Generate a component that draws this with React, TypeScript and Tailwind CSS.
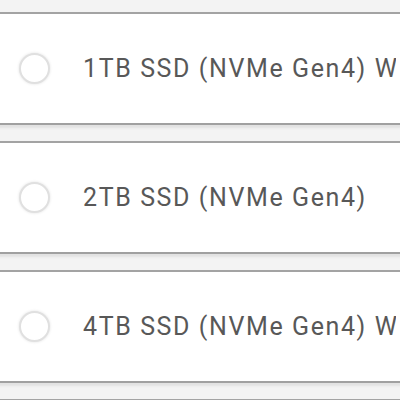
const OPTIONS = [
  '1TB SSD (NVMe Gen4) With Heatsink',
  '2TB SSD (NVMe Gen4)',
  '4TB SSD (NVMe Gen4) With Heatsink',
  '8TB SSD (NVMe Gen4)',
]

export default function App() {
  return (
    <div className="h-[400px] w-[400px] overflow-hidden bg-[#f3f3f3] font-['Roboto',sans-serif]">
      <div className="flex w-[600px] -ml-2 flex-col gap-4 pt-3">
        {OPTIONS.map((label) => (
          <label
            key={label}
            className="flex h-[113px] shrink-0 items-center border-y-2 border-t-[#a3a3a3] border-b-[#a0a0a0] bg-white pl-[27px] shadow-[0_3px_2px_#e2e2e2]"
          >
            <span className="h-[31px] w-[31px] shrink-0 rounded-full border-2 border-[#e0e0e0] bg-white shadow-[0_0_3px_rgba(0,0,0,0.12)]" />
            <span className="ml-[33px] max-w-[313px] overflow-hidden whitespace-nowrap text-[25px] leading-[1.4] tracking-[1.6px] text-[#585858]">
              {label}
            </span>
          </label>
        ))}
      </div>
    </div>
  )
}
